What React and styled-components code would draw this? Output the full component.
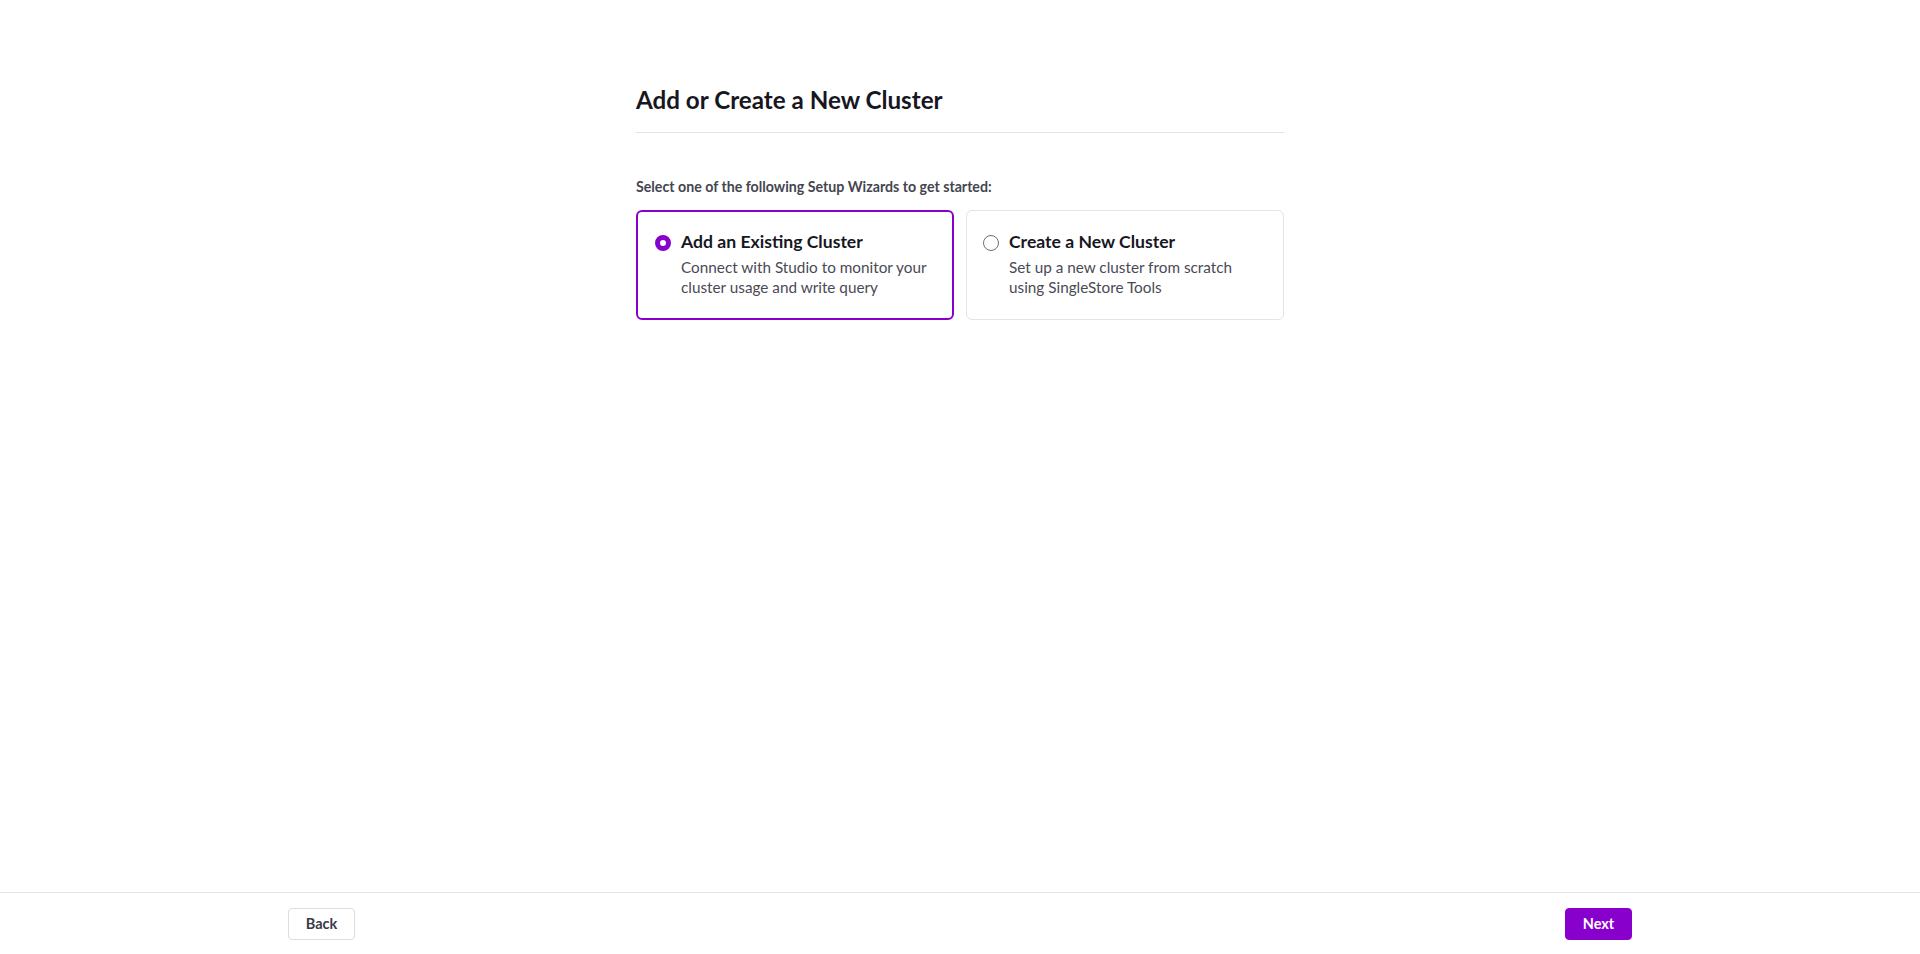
import React, { useState } from 'react'
import styled, { createGlobalStyle } from 'styled-components'

const GlobalStyle = createGlobalStyle`
  html, body {
    margin: 0;
    padding: 0;
    background: #ffffff;
    font-family: Lato, "Noto Sans", sans-serif;
    color: #1c1c24;
  }
  * { box-sizing: border-box; }
`

const purple = '#8800cc'

const Page = styled.div`
  display: flex;
  flex-direction: column;
  min-height: 100vh;
`

const Main = styled.main`
  flex: 1;
  width: 648px;
  margin: 0 auto;
  padding-top: 84px;
`

const Title = styled.h1`
  margin: 0;
  padding-bottom: 16px;
  border-bottom: 1px solid #e4e4e8;
  font-size: 24.2px;
  line-height: 32px;
  font-weight: 700;
  color: #17171f;
`

const Lead = styled.p`
  margin: 44px 0 13px;
  font-size: 14.2px;
  line-height: 20px;
  font-weight: 700;
  color: #45454f;
`

const Options = styled.div`
  display: grid;
  grid-template-columns: 1fr 1fr;
  gap: 12px;
`

const Card = styled.label`
  display: flex;
  align-items: flex-start;
  gap: 10px;
  height: 110px;
  padding: ${p => (p.$active ? '20px 17px' : '21px 16px')};
  border: ${p => (p.$active ? `2px solid ${purple}` : '1px solid #e3e3e8')};
  border-radius: 6px;
  cursor: pointer;
  background: #fff;
`

const Radio = styled.span`
  flex: none;
  width: 16px;
  height: 16px;
  margin-top: 3px;
  border-radius: 50%;
  border: ${p => (p.$active ? `5px solid ${purple}` : '1px solid #6e6e78')};
  background: #fff;
`

const CardText = styled.div`
  display: flex;
  flex-direction: column;
  margin-top: -2px;
`

const CardTitle = styled.span`
  font-size: 17.6px;
  line-height: 24px;
  font-weight: 700;
  color: #17171f;
`

const CardDesc = styled.span`
  font-size: 15.3px;
  line-height: 20px;
  color: #4a4a55;
  margin-top: 3px;
`

const Footer = styled.footer`
  height: 62px;
  border-top: 1px solid #e4e4e8;
`

const FooterInner = styled.div`
  width: 1344px;
  height: 100%;
  margin: 0 auto;
  display: flex;
  align-items: center;
  justify-content: space-between;
`

const Button = styled.button`
  height: 32px;
  padding: 0 14px;
  min-width: 67px;
  border-radius: 4px;
  font-family: Lato, "Noto Sans", sans-serif;
  font-size: 14.5px;
  font-weight: 700;
  cursor: pointer;
  border: 1px solid ${p => (p.$primary ? purple : '#dcdce2')};
  background: ${p => (p.$primary ? purple : '#fff')};
  color: ${p => (p.$primary ? '#fff' : '#3a3a48')};
`

const options = [
  {
    id: 'existing',
    title: 'Add an Existing Cluster',
    desc: ['Connect with Studio to monitor your', 'cluster usage and write query']
  },
  {
    id: 'new',
    title: 'Create a New Cluster',
    desc: ['Set up a new cluster from scratch', 'using SingleStore Tools']
  }
]

function App () {
  const [selected, setSelected] = useState('existing')

  return (
    <>
      <GlobalStyle />
      <Page>
        <Main>
          <Title>Add or Create a New Cluster</Title>
          <Lead>Select one of the following Setup Wizards to get started:</Lead>
          <Options>
            {options.map(o => {
              const active = selected === o.id
              return (
                <Card key={o.id} $active={active} onClick={() => setSelected(o.id)}>
                  <Radio $active={active} />
                  <CardText>
                    <CardTitle>{o.title}</CardTitle>
                    <CardDesc>
                      {o.desc[0]}
                      <br />
                      {o.desc[1]}
                    </CardDesc>
                  </CardText>
                </Card>
              )
            })}
          </Options>
        </Main>
        <Footer>
          <FooterInner>
            <Button>Back</Button>
            <Button $primary>Next</Button>
          </FooterInner>
        </Footer>
      </Page>
    </>
  )
}

export default App
